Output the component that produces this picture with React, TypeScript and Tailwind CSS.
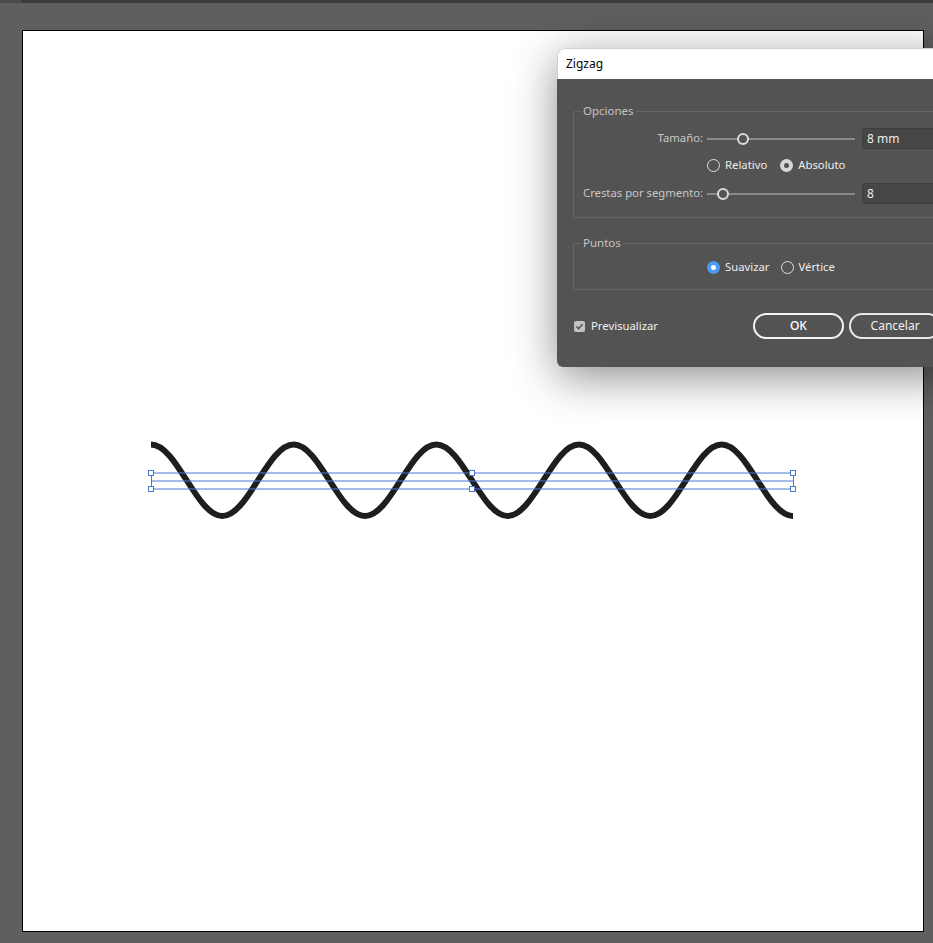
import React from "react";

const FONT = { fontFamily: '"Noto Sans", "Open Sans", sans-serif' };

function wavePath() {
  const x0 = 151;
  const w = 642 / 9;
  const yTop = 444.5;
  const yBot = 516;
  const h = w * 0.3634;
  let d = `M ${x0} ${yTop}`;
  for (let i = 0; i < 9; i++) {
    const xs = x0 + i * w;
    const xe = xs + w;
    const ys = i % 2 === 0 ? yTop : yBot;
    const ye = i % 2 === 0 ? yBot : yTop;
    d += ` C ${(xs + h).toFixed(2)} ${ys} ${(xe - h).toFixed(2)} ${ye} ${xe.toFixed(2)} ${ye}`;
  }
  return d;
}

function Slider({ pos }: { pos: number }) {
  return (
    <div className="relative w-[148px] h-[12px] flex items-center">
      <div className="w-full h-[2px] bg-[#8a8a8a]" />
      <div
        className="absolute top-[0px] w-[12px] h-[12px] rounded-full border-2 border-[#dcdcdc] bg-[#535353]"
        style={{ left: pos - 6 }}
      />
    </div>
  );
}

function Radio({ checked, blue }: { checked?: boolean; blue?: boolean }) {
  if (checked && blue) {
    return (
      <span className="w-[13px] h-[13px] rounded-full bg-[#4b9cf0] flex items-center justify-center">
        <span className="w-[5px] h-[5px] rounded-full bg-white" />
      </span>
    );
  }
  if (checked) {
    return (
      <span className="w-[13px] h-[13px] rounded-full bg-[#d6d6d6] flex items-center justify-center">
        <span className="w-[5px] h-[5px] rounded-full bg-[#535353]" />
      </span>
    );
  }
  return <span className="w-[13px] h-[13px] rounded-full border border-[#e0e0e0]" />;
}

function NumInput({ value }: { value: string }) {
  return (
    <div className="w-[80px] h-[21px] bg-[#464646] border border-[#3e3e3e] rounded-[3px] flex items-center pl-[4px] text-[12px] text-[#ececec]">
      {value}
    </div>
  );
}

export default function App() {
  const handles = [
    [151, 473],
    [151, 489],
    [472, 473],
    [472, 489],
    [793, 473],
    [793, 489],
  ];
  return (
    <div className="relative w-[933px] h-[943px] bg-[#5f5f5f] overflow-hidden" style={FONT}>
      <div className="flex h-[3px]">
        <div className="w-[21px] bg-[#4a4a4a]" />
        <div className="flex-1 bg-[#3c3c3c]" />
      </div>
      <div className="ml-[22px] mt-[27px] w-[902px] h-[902px] border border-black bg-white" />

      <svg className="absolute left-0 top-0 pointer-events-none" width={933} height={943}>
        <path d={wavePath()} fill="none" stroke="#1e1e1e" strokeWidth={6} strokeLinecap="butt" />
        <line x1={151} y1={473} x2={793} y2={473} stroke="#4a78d4" strokeWidth={1} />
        <line x1={151} y1={481} x2={793} y2={481} stroke="#4a78d4" strokeWidth={1} />
        <line x1={151} y1={489} x2={793} y2={489} stroke="#4a78d4" strokeWidth={1} />
        <line x1={151.5} y1={473} x2={151.5} y2={489} stroke="#4a78d4" strokeWidth={1} />
        <line x1={793.5} y1={473} x2={793.5} y2={489} stroke="#4a78d4" strokeWidth={1} />
        {handles.map(([x, y], i) => (
          <rect key={i} x={x - 2.5} y={y - 2.5} width={5} height={5} fill="white" stroke="#4a78d4" strokeWidth={1} />
        ))}
      </svg>

      <div className="absolute left-[557px] top-[48px] w-[400px] rounded-tl-[8px] rounded-bl-[6px] overflow-hidden shadow-[0_10px_45px_rgba(0,0,0,0.45)]">
        <div className="h-[31px] bg-white flex items-center pl-[8px] text-[12px] text-black border-l border-t border-[#d0d0d0] rounded-tl-[8px]">
          Zigzag
        </div>
        <div className="bg-[#535353] px-[16px] pt-[24px] pb-[28px] text-[11.3px]">
          <fieldset className="border border-[#666666] rounded-[2px] pl-[9px] pt-[9px] pb-[13px]">
            <legend className="-ml-[2px] px-[2px] text-[11.5px] leading-[16px] text-[#c4c4c4]">Opciones</legend>
            <div className="flex items-center h-[21px]">
              <span className="w-[120px] text-right text-[#c8c8c8] whitespace-nowrap">Tamaño:</span>
              <div className="ml-[4px]">
                <Slider pos={36} />
              </div>
              <div className="ml-[7px]">
                <NumInput value="8 mm" />
              </div>
            </div>
            <div className="flex items-center h-[21px] mt-[6px] pl-[124px] text-[#ededed]">
              <Radio />
              <span className="ml-[5px]">Relativo</span>
              <span className="ml-[13px] flex">
                <Radio checked />
              </span>
              <span className="ml-[5px]">Absoluto</span>
            </div>
            <div className="flex items-center h-[21px] mt-[7px]">
              <span className="w-[120px] text-right text-[#c8c8c8] whitespace-nowrap">Crestas por segmento:</span>
              <div className="ml-[4px]">
                <Slider pos={16} />
              </div>
              <div className="ml-[7px]">
                <NumInput value="8" />
              </div>
            </div>
          </fieldset>

          <fieldset className="mt-[17px] border border-[#666666] rounded-[2px] pl-[9px] pt-[6px] pb-[11px]">
            <legend className="-ml-[2px] px-[2px] text-[11.5px] leading-[16px] text-[#c4c4c4]">Puntos</legend>
            <div className="flex items-center h-[21px] pl-[124px] text-[#ededed]">
              <Radio checked blue />
              <span className="ml-[5px]">Suavizar</span>
              <span className="ml-[11px] flex">
                <Radio />
              </span>
              <span className="ml-[5px]">Vértice</span>
            </div>
          </fieldset>

          <div className="mt-[23px] flex items-center h-[26px]">
            <div className="w-[180px] flex items-center">
              <span className="w-[11px] h-[11px] ml-[1px] rounded-[2px] bg-[#c2c2c2] flex items-center justify-center">
                <svg width="9" height="9" viewBox="0 0 9 9">
                  <path d="M1.5 4.6 L3.6 6.6 L7.6 2.2" fill="none" stroke="#555555" strokeWidth={1.6} />
                </svg>
              </span>
              <span className="ml-[6px] text-[#f0f0f0]">Previsualizar</span>
            </div>
            <button className="w-[92px] h-[26px] rounded-full border-2 border-[#f4f4f4] text-[12px] text-white font-medium">
              OK
            </button>
            <button className="ml-[5px] w-[92px] h-[26px] rounded-full border-2 border-[#e8e8e8] text-[12px] text-[#f2f2f2]">
              Cancelar
            </button>
          </div>
        </div>
      </div>
    </div>
  );
}
